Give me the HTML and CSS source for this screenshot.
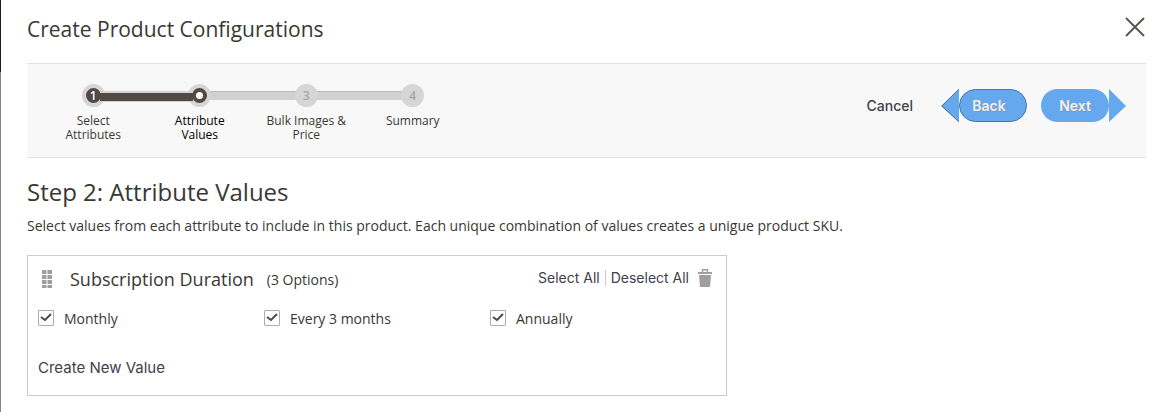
FILE: index.html
```html
<!DOCTYPE html>
<html lang="en">
<head>
    <meta charset="UTF-8">
    <meta name="viewport" content="width=device-width, initial-scale=1.0">
    <title>Create Product Configurations</title>
    <link rel="stylesheet" href="styles.css">
</head>
<body>
    <div class="modal">
        <header class="modal-header">
            <h1 class="modal-title">Create Product Configurations</h1>
            <button class="close" type="button" aria-label="Close">
                <svg width="20" height="20" viewBox="0 0 20 20">
                    <path d="M1 1L19 19M19 1L1 19" stroke="#5f564f" stroke-width="2" fill="none"/>
                </svg>
            </button>
        </header>

        <div class="wizard">
            <ol class="steps">
                <li class="step done"><span class="dot">1</span><span class="step-name">Select Attributes</span></li>
                <li class="step active"><span class="dot"></span><span class="step-name">Attribute Values</span></li>
                <li class="step"><span class="dot">3</span><span class="step-name">Bulk Images &amp; Price</span></li>
                <li class="step"><span class="dot">4</span><span class="step-name">Summary</span></li>
            </ol>
            <div class="wizard-buttons">
                <button class="cancel" type="button">Cancel</button>
                <button class="nav back" type="button">
                    <svg class="arrow" width="18" height="33" viewBox="0 0 18 33">
                        <path d="M18 0V33L0 17Z" fill="#65a8ee"/>
                        <path d="M18 0L1 17L18 33" fill="none" stroke="#47759f"/>
                    </svg>
                    <span class="pill">Back</span>
                </button>
                <button class="nav next" type="button">
                    <span class="pill">Next</span>
                    <svg class="arrow" width="17" height="33" viewBox="0 0 17 33">
                        <path d="M0 0V33L17 17Z" fill="#65a8ee"/>
                    </svg>
                </button>
            </div>
        </div>

        <main>
            <h2 class="step-title">Step 2: Attribute Values</h2>
            <p class="note">Select values from each attribute to include in this product. Each unique combination of values creates a unigue product SKU.</p>

            <section class="attribute">
                <div class="attribute-header">
                    <svg class="drag" width="10" height="18" viewBox="0 0 10 18" fill="#9e9e9e">
                        <path d="M0 0h4.500v4H0zM5.500 0h4.500v4H5.500zM0 5h4.500v4H0zM5.500 5h4.500v4H5.500zM0 10h4.500v4H0zM5.500 10h4.500v4H5.500zM0 15h4.500v3H0zM5.500 15h4.500v3H5.500z"/>
                    </svg>
                    <h3 class="attribute-name">Subscription Duration</h3>
                    <span class="count">(3 Options)</span>
                    <div class="attribute-actions">
                        <button type="button">Select All</button>
                        <button type="button">Deselect All</button>
                        <button class="trash" type="button" aria-label="Remove attribute">
                            <svg width="14" height="18" viewBox="0 0 14 18">
                                <path d="M4.500 3V.7h5V3" fill="none" stroke="#9e9e9e" stroke-width="1.400"/>
                                <path d="M0 3h14v2H0zM1 6h12l-1 12H2z" fill="#9e9e9e"/>
                            </svg>
                        </button>
                    </div>
                </div>
                <div class="options">
                    <label><input type="checkbox" checked>Monthly</label>
                    <label><input type="checkbox" checked>Every 3 months</label>
                    <label><input type="checkbox" checked>Annually</label>
                </div>
                <button class="create" type="button">Create New Value</button>
            </section>
        </main>
    </div>
</body>
</html>
```

FILE: styles.css
```css
* {
    padding: 0;
    margin: 0;
    box-sizing: border-box;
}

body {
    background: linear-gradient(#1c1830 72px, #858585 72px);
    color: #383833;
    font-family: "Open Sans", sans-serif;
    font-size: 14px;
    line-height: 20px;
}

button {
    border: 0;
    background: none;
    color: #41414a;
    font-family: Inter, sans-serif;
    font-size: 14px;
    line-height: 20px;
    cursor: pointer;
}

svg {
    display: block;
}

.modal {
    min-height: 100vh;
    margin-left: 1px;
    padding: 0 20px 16px 26px;
    background-color: #fff;
}

.modal-header {
    display: flex;
    justify-content: space-between;
    padding: 14px 0 19px;
}

.modal-title {
    font-size: 21px;
    font-weight: 400;
    line-height: 30px;
}

.close {
    align-self: flex-start;
    padding: 3px 1px;
}

.wizard {
    display: flex;
    justify-content: space-between;
    align-items: flex-start;
    min-height: 95px;
    padding: 20px 20px 14px 13px;
    background-color: #f8f8f8;
    border-top: 1px solid #e3e3e3;
    border-bottom: 1px solid #e3e3e3;
}

.steps {
    display: grid;
    grid-template-columns: repeat(4, 1fr);
    width: 426px;
    list-style: none;
}

.step {
    position: relative;
    display: flex;
    flex-direction: column;
    align-items: center;
    gap: 7px;
    font-size: 12px;
    line-height: 14px;
    text-align: center;
}

/* track to the next step */
.step:not(:last-child)::before {
    content: "";
    position: absolute;
    top: 7px;
    left: 50%;
    width: 100%;
    height: 8px;
    background-color: #d1d1d1;
    border-top: 1px solid #bababa;
}

/* the finished part runs over the rings of both dots */
.step.done::before {
    z-index: 2;
    left: calc(50% + 7px);
    width: calc(100% - 14px);
    border-top: 2px solid #d1d1d1;
    border-bottom: 1px solid #d1d1d1;
    background: #514943 padding-box;
}

.dot {
    position: relative;
    z-index: 1;
    width: 23px;
    height: 23px;
    border-radius: 50%;
    background-color: #d6d6d6;
    color: #a8a8a8;
    font-weight: 600;
    line-height: 23px;
}

.done .dot, .active .dot {
    border: 4px solid #d6d6d6;
    background-color: #514943;
    color: #fff;
    line-height: 15px;
}

.active .dot::after {
    content: "";
    display: block;
    width: 7px;
    height: 7px;
    margin: 4px;
    border-radius: 50%;
    background-color: #fff;
}

.step-name {
    max-width: 86px;
    font-weight: 500;
}

.active .step-name {
    color: #000;
}

.wizard-buttons {
    display: flex;
    align-items: center;
    gap: 14px;
    padding-top: 5px;
}

.cancel {
    margin-right: 14px;
    font-weight: 500;
}

.nav {
    display: flex;
    color: #f2f2f2;
    font-weight: 600;
    text-shadow: 1px 1px 0 #8896a8;
}

.pill {
    width: 68px;
    height: 33px;
    border-radius: 17px;
    background-color: #65a8ee;
    line-height: 33px;
}

.back .pill {
    padding-right: 8px;
    border: 1px solid #47759f;
    line-height: 31px;
}

.step-title {
    margin-top: 18px;
    font-size: 24px;
    font-weight: 400;
    line-height: 32px;
}

.note {
    margin-top: 8px;
}

.attribute {
    max-width: 700px;
    margin-top: 19px;
    padding: 10px 10px 17px;
    border: 1px solid #ccc;
}

.attribute-header {
    display: flex;
    align-items: center;
    min-height: 26px;
}

.drag {
    margin: 0 18px 0 4px;
}

.attribute-name {
    font-size: 18px;
    font-weight: 400;
    line-height: 24px;
}

.count {
    margin-left: 13px;
    padding-top: 2px;
}

.attribute-actions {
    display: flex;
    align-items: center;
    margin: 0 4px 3px auto;
}

.attribute-actions button + button {
    margin-left: 5px;
    padding-left: 5px;
    border-left: 1px solid #ccc;
    line-height: 16px;
}

.attribute-actions .trash {
    margin-left: 4px;
    border: 0;
}

.options {
    display: grid;
    grid-template-columns: repeat(3, 1fr);
    margin-top: 17px;
}

.options label {
    display: flex;
    gap: 10px;
}

.options input {
    appearance: none;
    width: 16px;
    height: 16px;
    margin-top: 1px;
    border: 1px solid #adadad;
    border-radius: 1px;
    /* check mark */
    background: #fff url("data:image/svg+xml,%3Csvg xmlns='http://www.w3.org/2000/svg' viewBox='0 0 14 14'%3E%3Cpath d='M2 6L6 9L12 3' fill='none' stroke='%23514943' stroke-width='2'/%3E%3C/svg%3E") center / 14px 14px no-repeat;
}

.create {
    display: block;
    margin-top: 29px;
    font-size: 15px;
}
```
